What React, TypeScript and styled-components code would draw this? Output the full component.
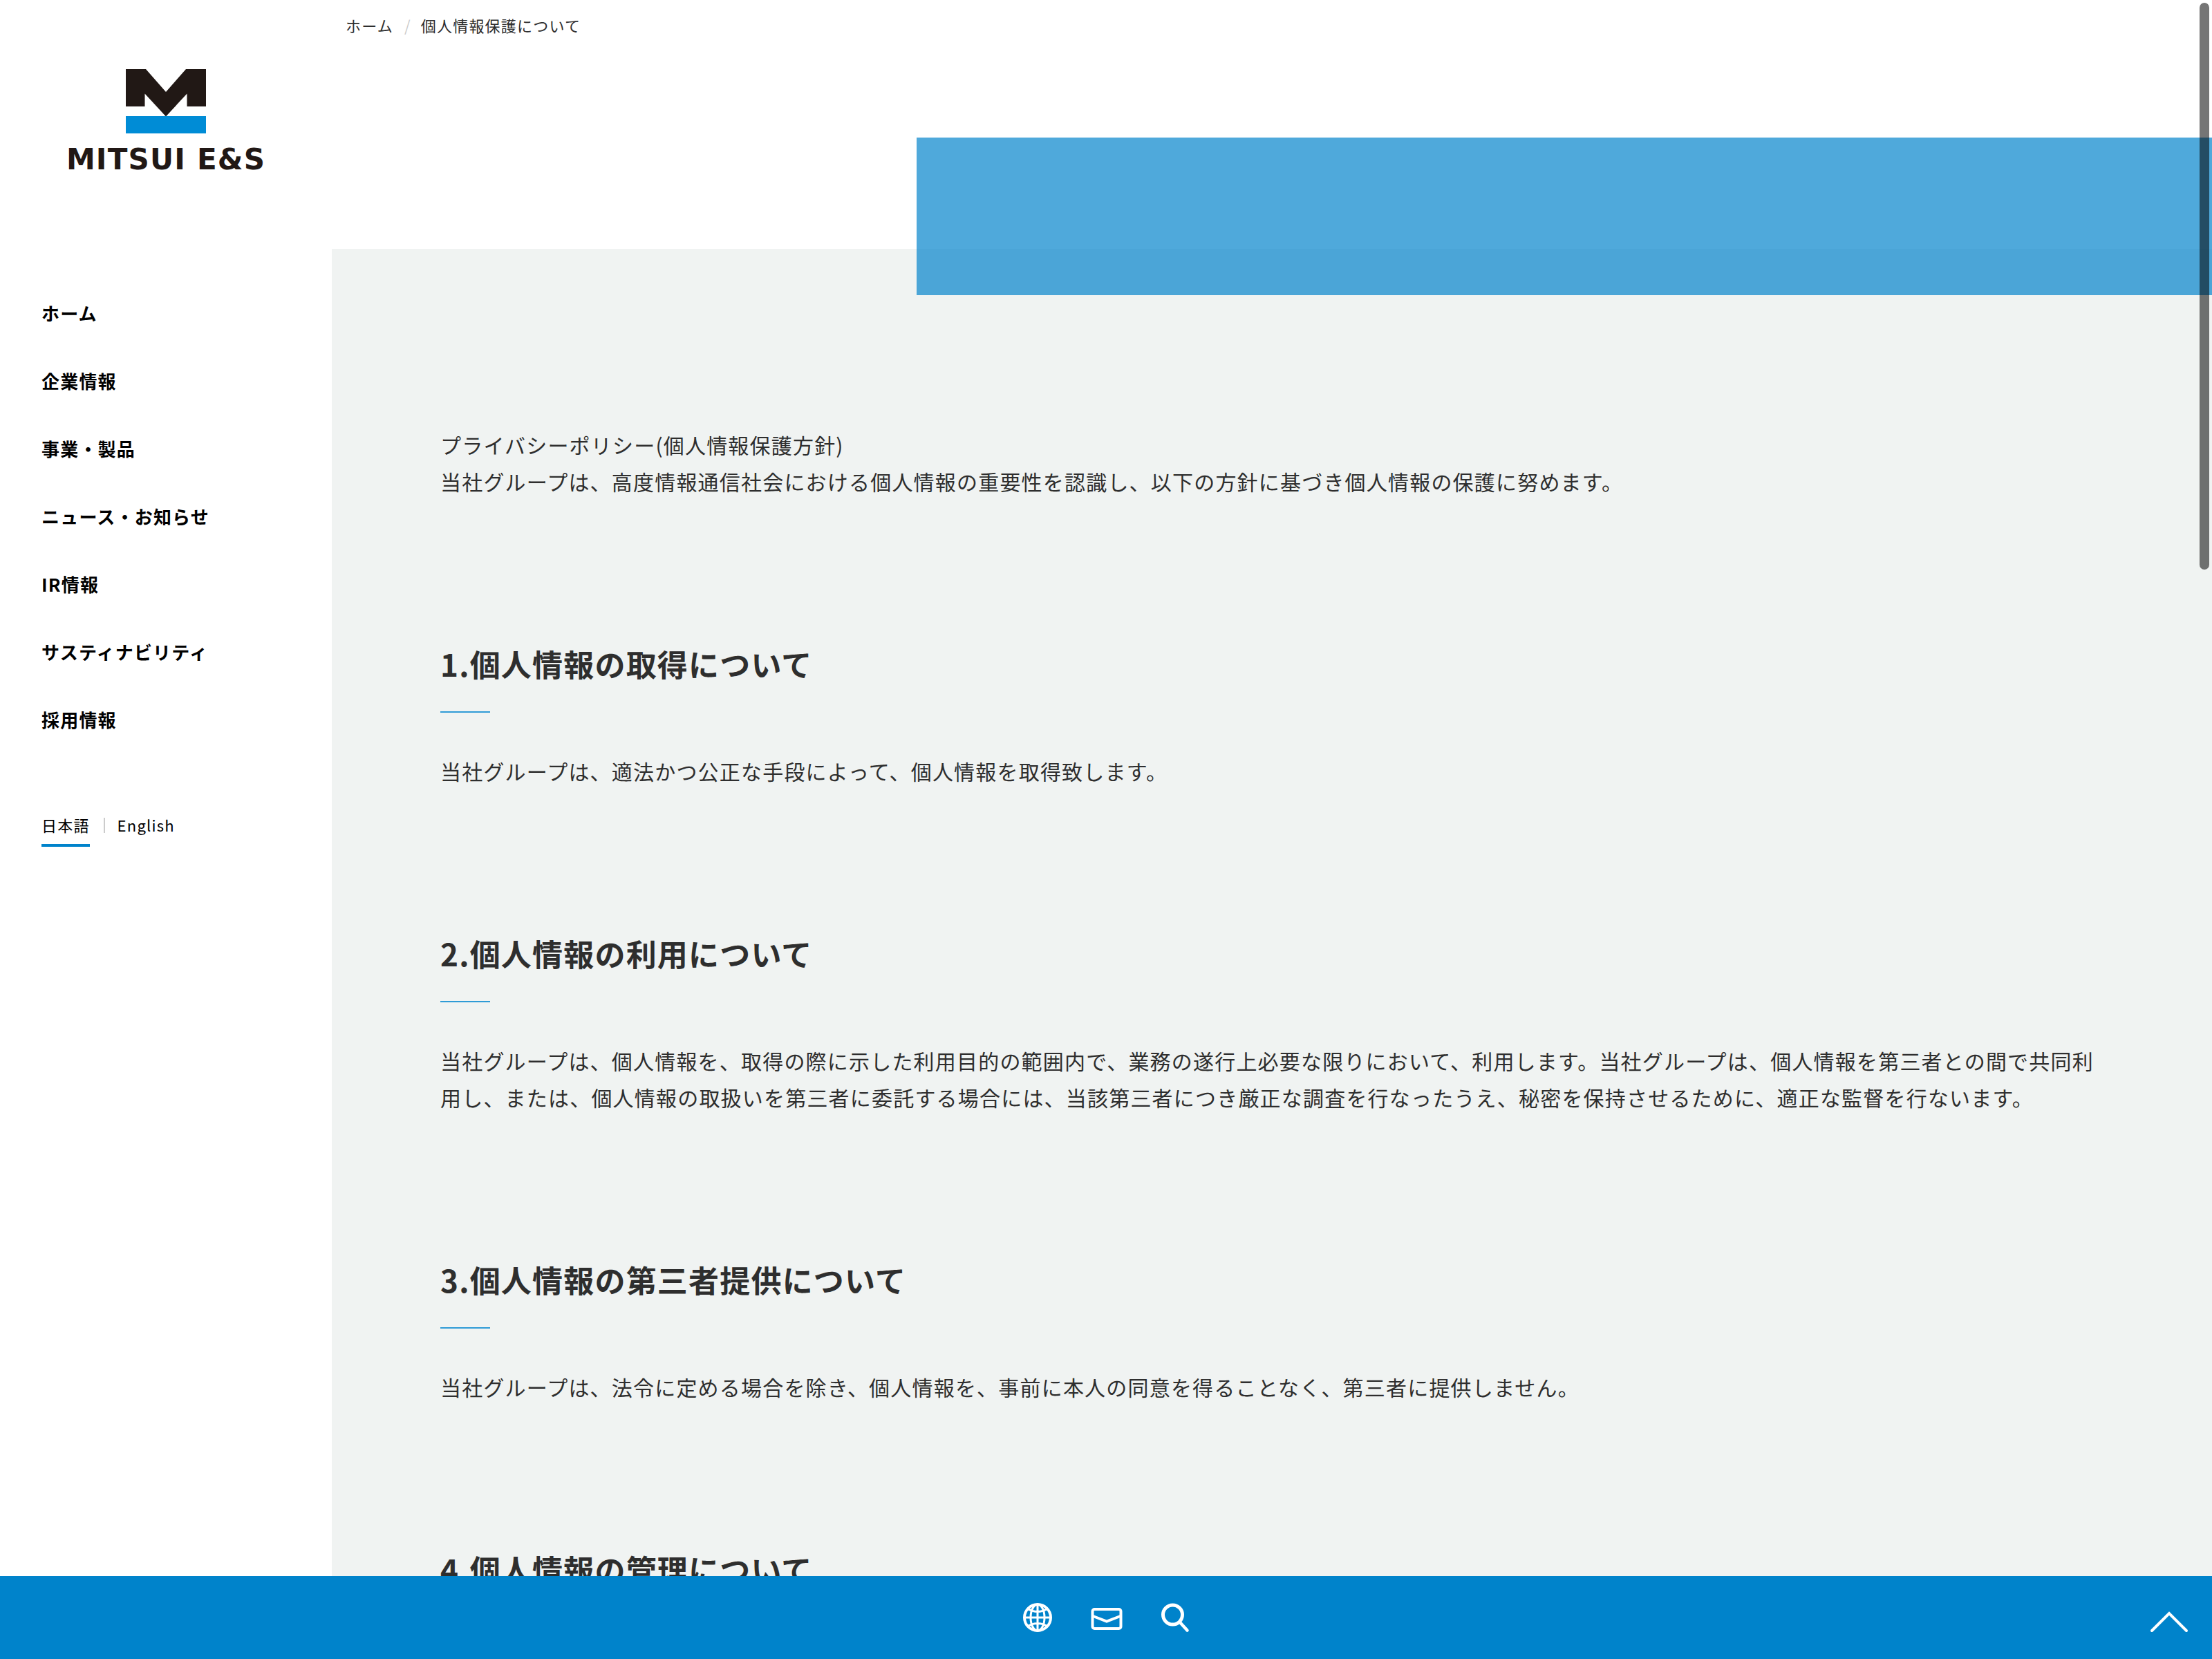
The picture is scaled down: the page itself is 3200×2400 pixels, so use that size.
import React from "react";
import styled, { createGlobalStyle } from "styled-components";

const colors = {
  brand: "#0083cb",
  logoBlue: "#008cd6",
  logoInk: "#211815",
  text: "#2e2e2e",
  surface: "#f0f3f2",
  divider: "#cccccc",
};

const GlobalStyle = createGlobalStyle`
  *, *::before, *::after { box-sizing: border-box; }
  body {
    margin: 0;
    background: #ffffff;
    color: ${colors.text};
    font-family: "Noto Sans CJK JP", sans-serif;
    font-size: 30px;
    line-height: 53px;
    letter-spacing: 0.04em;
  }
  h2, p, ul, ol { margin: 0; padding: 0; }
  ul, ol { list-style: none; }
  a { color: inherit; text-decoration: none; }
`;

const Shell = styled.div`
  display: grid;
  grid-template-columns: 480px minmax(0, 1fr);
  grid-template-rows: minmax(0, 1fr) auto;
  height: 100vh;
`;

const Sidebar = styled.header`
  display: flex;
  flex-direction: column;
  padding: 100px 60px 0;
  color: #000000;
`;

const Logo = styled.a`
  display: flex;
  flex-direction: column;
  align-items: center;
  gap: 16px;
`;

const LogoMark = styled.svg`
  display: block;
  width: 116px;
  height: 93px;
`;

const LogoType = styled.span`
  color: ${colors.logoInk};
  font-family: "DejaVu Sans", sans-serif;
  font-size: 42px;
  font-weight: 700;
  line-height: 44px;
  white-space: nowrap;
`;

const NavList = styled.ul`
  display: flex;
  flex-direction: column;
  gap: 58px;
  padding-top: 180px;
`;

const NavLink = styled.a`
  display: block;
  font-size: 26px;
  font-weight: 700;
  line-height: 40px;
`;

const Languages = styled.ul`
  display: flex;
  align-items: flex-start;
  padding-top: 116px;
  font-size: 22px;
  line-height: 32px;
`;

const LanguageItem = styled.li`
  display: flex;

  & + &::before {
    content: "";
    width: 2px;
    height: 22px;
    margin: 6px 18px 0 20px;
    background: ${colors.divider};
  }
`;

const LanguageLink = styled.a<{ $current?: boolean }>`
  padding-bottom: 12px;
  border-bottom: 4px solid ${(p) => (p.$current ? colors.brand : "transparent")};
`;

const Main = styled.main`
  position: relative;
  overflow-y: auto;
  scrollbar-width: none;
  background: ${colors.surface};
`;

const PageHead = styled.div`
  height: 360px;
  padding-top: 20px;
  background: #ffffff;
`;

const Breadcrumbs = styled.ol`
  display: flex;
  padding-left: 20px;
  font-size: 22px;
  line-height: 32px;
`;

const Crumb = styled.li`
  & + &::before {
    content: "/";
    margin: 0 14px 0 16px;
    color: ${colors.divider};
  }
`;

const TitleBand = styled.div`
  height: 228px;
  margin: 147px 0 0 846px;
  background: rgba(0, 131, 203, 0.69);
  position: relative;
`;

const Article = styled.article`
  display: flex;
  flex-direction: column;
  gap: 207px;
  padding: 257px 157px 207px;
`;

const Heading = styled.h2`
  font-size: 44px;
  font-weight: 700;
  line-height: 60px;

  &::after {
    content: "";
    display: block;
    width: 72px;
    height: 2px;
    margin: 39px 0 58px;
    background: #2f9bd6;
  }
`;

const Toolbar = styled.footer`
  grid-column: 1 / -1;
  display: grid;
  grid-template-columns: 1fr auto 1fr;
  align-items: center;
  height: 120px;
  padding: 0 34px;
  background: ${colors.brand};
  color: #ffffff;
`;

const Tools = styled.div`
  grid-column: 2;
  display: flex;
  gap: 52px;
`;

const IconButton = styled.button<{ $size: number }>`
  width: ${(p) => p.$size}px;
  height: ${(p) => p.$size}px;
  padding: 0;
  border: 0;
  background: none;
  color: inherit;
  cursor: pointer;

  svg {
    display: block;
    width: 100%;
    height: 100%;
    fill: none;
    stroke: currentColor;
  }
`;

const TopButton = styled(IconButton)`
  justify-self: end;
`;

const ScrollThumb = styled.div`
  position: fixed;
  top: 4px;
  right: 4px;
  width: 14px;
  height: 820px;
  border-radius: 7px;
  background: rgba(0, 0, 0, 0.54);
`;

const navItems = [
  "ホーム",
  "企業情報",
  "事業・製品",
  "ニュース・お知らせ",
  "IR情報",
  "サスティナビリティ",
  "採用情報",
];

const sections = [
  {
    title: "1.個人情報の取得について",
    body: "当社グループは、適法かつ公正な手段によって、個人情報を取得致します。",
  },
  {
    title: "2.個人情報の利用について",
    body: "当社グループは、個人情報を、取得の際に示した利用目的の範囲内で、業務の遂行上必要な限りにおいて、利用します。当社グループは、個人情報を第三者との間で共同利用し、または、個人情報の取扱いを第三者に委託する場合には、当該第三者につき厳正な調査を行なったうえ、秘密を保持させるために、適正な監督を行ないます。",
  },
  {
    title: "3.個人情報の第三者提供について",
    body: "当社グループは、法令に定める場合を除き、個人情報を、事前に本人の同意を得ることなく、第三者に提供しません。",
  },
  { title: "4.個人情報の管理について", body: "" },
];

const GlobeIcon = () => (
  <svg viewBox="0 0 48 48" aria-hidden="true" strokeWidth="3">
    <circle cx="25" cy="24" r="19" strokeWidth="4" />
    <ellipse cx="25" cy="24" rx="10" ry="19" />
    <path d="M25 4v40M5 24h40M10 11q15 9 30 0M10 37q15 -9 30 0" />
  </svg>
);

const MailIcon = () => (
  <svg viewBox="0 0 48 48" aria-hidden="true" strokeWidth="4">
    <rect x="4.5" y="12" width="41" height="28" rx="3" />
    <path d="M4 21.5l21 8 21-8" />
  </svg>
);

const SearchIcon = () => (
  <svg viewBox="0 0 48 48" aria-hidden="true" strokeWidth="5" strokeLinecap="round">
    <circle cx="20.5" cy="20" r="14" />
    <path d="M31 31l10.5 11.5" strokeWidth="4.5" />
  </svg>
);

const ChevronUpIcon = () => (
  <svg viewBox="0 0 56 56" aria-hidden="true" strokeWidth="4" strokeLinecap="round">
    <path d="M3 47l25-25 25 25" />
  </svg>
);

export default function App() {
  return (
    <>
      <GlobalStyle />
      <Shell>
        <Sidebar>
          <Logo href="#">
            <LogoMark viewBox="0 0 116 93" aria-hidden="true">
              <path
                d="M0 0h29l29 33L87 0h29v54H88.500V35.500L58 68.500 27.500 35.500V54H0z"
                fill={colors.logoInk}
              />
              <rect y="68" width="116" height="25" fill={colors.logoBlue} />
            </LogoMark>
            <LogoType>MITSUI E&amp;S</LogoType>
          </Logo>
          <nav>
            <NavList>
              {navItems.map((item) => (
                <li key={item}>
                  <NavLink href="#">{item}</NavLink>
                </li>
              ))}
            </NavList>
          </nav>
          <Languages>
            <LanguageItem>
              <LanguageLink href="#" $current>
                日本語
              </LanguageLink>
            </LanguageItem>
            <LanguageItem>
              <LanguageLink href="#" lang="en">
                English
              </LanguageLink>
            </LanguageItem>
          </Languages>
        </Sidebar>
        <Main>
          <PageHead>
            <Breadcrumbs>
              <Crumb>
                <a href="#">ホーム</a>
              </Crumb>
              <Crumb>個人情報保護について</Crumb>
            </Breadcrumbs>
            <TitleBand />
          </PageHead>
          <Article>
            <p>
              プライバシーポリシー(個人情報保護方針)
              <br />
              当社グループは、高度情報通信社会における個人情報の重要性を認識し、以下の方針に基づき個人情報の保護に努めます。
            </p>
            {sections.map((section) => (
              <section key={section.title}>
                <Heading>{section.title}</Heading>
                {section.body && <p>{section.body}</p>}
              </section>
            ))}
          </Article>
        </Main>
        <Toolbar>
          <Tools>
            <IconButton type="button" $size={48} aria-label="言語">
              <GlobeIcon />
            </IconButton>
            <IconButton type="button" $size={48} aria-label="お問い合わせ">
              <MailIcon />
            </IconButton>
            <IconButton type="button" $size={48} aria-label="検索">
              <SearchIcon />
            </IconButton>
          </Tools>
          <TopButton type="button" $size={56} aria-label="ページの先頭へ">
            <ChevronUpIcon />
          </TopButton>
        </Toolbar>
      </Shell>
      <ScrollThumb aria-hidden="true" />
    </>
  );
}
